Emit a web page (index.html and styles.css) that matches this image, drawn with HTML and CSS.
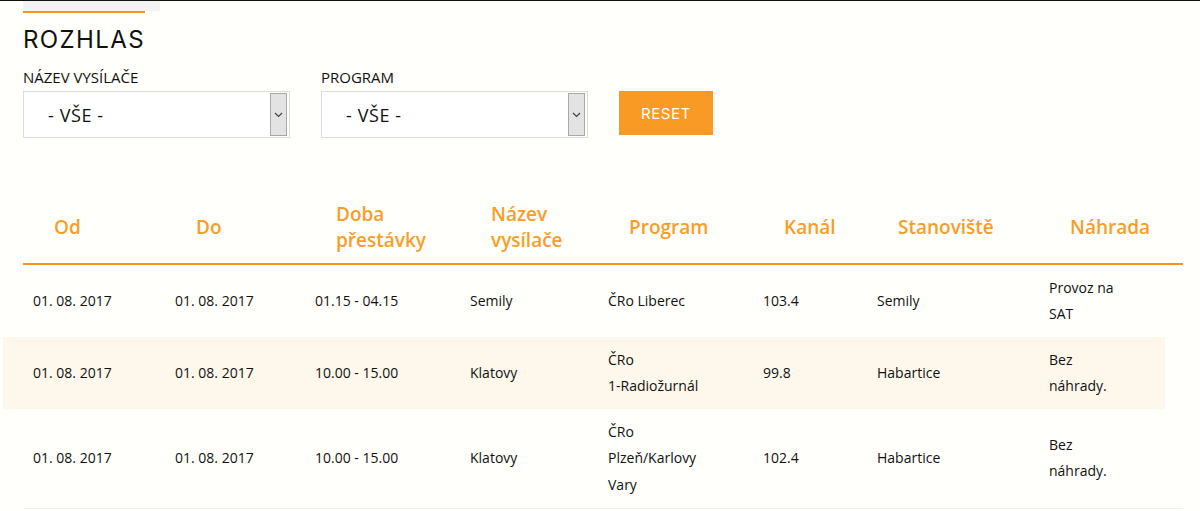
FILE: index.html
```html
<!DOCTYPE html>
<html lang="cs">
<head>
<meta charset="utf-8">
<title>Rozhlas</title>
<link rel="stylesheet" href="styles.css">
</head>
<body>
<div class="topline"></div>
<main class="page">
  <div class="accent"><div class="accent-gray"></div><div class="accent-line"></div></div>
  <h1 class="title">ROZHLAS</h1>
  <div class="filters">
    <div class="field">
      <label class="field-label">NÁZEV VYSÍLAČE</label>
      <div class="select">
        <span class="select-value">- VŠE -</span>
        <span class="select-btn"><svg width="9" height="6" viewBox="0 0 9 6"><path d="M1 1 L4.5 4.5 L8 1" fill="none" stroke="#444" stroke-width="1.2"/></svg></span>
      </div>
    </div>
    <div class="field">
      <label class="field-label">PROGRAM</label>
      <div class="select">
        <span class="select-value">- VŠE -</span>
        <span class="select-btn"><svg width="9" height="6" viewBox="0 0 9 6"><path d="M1 1 L4.5 4.5 L8 1" fill="none" stroke="#444" stroke-width="1.2"/></svg></span>
      </div>
    </div>
    <button class="reset" type="button">RESET</button>
  </div>

  <table class="outages">
    <colgroup>
      <col class="c1"><col class="c2"><col class="c3"><col class="c4"><col class="c5"><col class="c6"><col class="c7"><col class="c8">
    </colgroup>
    <thead>
      <tr>
        <th>Od</th>
        <th>Do</th>
        <th>Doba přestávky</th>
        <th>Název vysílače</th>
        <th>Program</th>
        <th>Kanál</th>
        <th>Stanoviště</th>
        <th>Náhrada</th>
      </tr>
    </thead>
    <tbody>
      <tr>
        <td>01. 08. 2017</td>
        <td>01. 08. 2017</td>
        <td>01.15 - 04.15</td>
        <td>Semily</td>
        <td class="prog">ČRo Liberec</td>
        <td>103.4</td>
        <td>Semily</td>
        <td class="repl">Provoz na SAT</td>
      </tr>
      <tr class="alt">
        <td>01. 08. 2017</td>
        <td>01. 08. 2017</td>
        <td>10.00 - 15.00</td>
        <td>Klatovy</td>
        <td class="prog">ČRo <span class="nowrap">1-Radiožurnál</span></td>
        <td>99.8</td>
        <td>Habartice</td>
        <td class="repl">Bez náhrady.</td>
      </tr>
      <tr class="last">
        <td>01. 08. 2017</td>
        <td>01. 08. 2017</td>
        <td>10.00 - 15.00</td>
        <td>Klatovy</td>
        <td class="prog">ČRo Plzeň/Karlovy Vary</td>
        <td>102.4</td>
        <td>Habartice</td>
        <td class="repl">Bez náhrady.</td>
      </tr>
    </tbody>
  </table>
</main>
</body>
</html>
```
FILE: styles.css
```css
html, body {
  margin: 0;
  padding: 0;
  background: #fffffb;
  font-family: "Open Sans", "Liberation Sans", sans-serif;
  color: #111;
}

.topline {
  height: 1px;
  background: #111;
}

.page {
  padding: 0 17px 0 23px;
}

.accent-gray {
  width: 137px;
  height: 10px;
  background: #f3f3f3;
}

.accent-line {
  width: 122px;
  height: 2px;
  background: #f7931e;
}

.title {
  margin: 12px 0 0;
  font-family: Inter, "Liberation Sans", sans-serif;
  font-weight: 400;
  font-size: 24px;
  line-height: 30px;
  letter-spacing: 1.4px;
  color: #111;
}

.filters {
  display: flex;
  align-items: flex-start;
  gap: 31px;
  margin-top: 12px;
}

.field {
  display: flex;
  flex-direction: column;
  gap: 4px;
}

.field-label {
  font-size: 15px;
  line-height: 20px;
  color: #111;
}

.select {
  box-sizing: border-box;
  width: 267px;
  height: 47px;
  border: 1px solid #dcdcdc;
  background: #fff;
  display: flex;
  align-items: stretch;
  padding: 1px 2px 1px 24px;
}

.select-value {
  flex: 1;
  display: flex;
  align-items: center;
  font-size: 18px;
  letter-spacing: 0.6px;
  color: #111;
}

.select-btn {
  box-sizing: border-box;
  width: 17px;
  border: 1px solid #a8a8a8;
  background: #e3e3e3;
  display: flex;
  align-items: center;
  justify-content: center;
}

.reset {
  margin-top: 24px;
  width: 94px;
  height: 44px;
  border: 0;
  background: #f99a24;
  color: #fff;
  font-family: Inter, "Liberation Sans", sans-serif;
  font-size: 15px;
  letter-spacing: 0.6px;
  padding: 0;
}

.outages {
  margin-top: 53px;
  width: 1160px;
  table-layout: fixed;
  border-collapse: separate;
  border-spacing: 0;
}

.c1 { width: 142px; }
.c2 { width: 140px; }
.c3 { width: 155px; }
.c4 { width: 138px; }
.c5 { width: 155px; }
.c6 { width: 114px; }
.c7 { width: 172px; }
.c8 { width: 144px; }

.outages th {
  text-align: left;
  vertical-align: middle;
  padding: 10px 10px 10px 31px;
  font-size: 19px;
  font-weight: 600;
  line-height: 26px;
  color: #f99d28;
  border-bottom: 2px solid #f7931e;
}

.outages td {
  vertical-align: middle;
  padding: 9.5px 30px 9.5px 10px;
  font-size: 14px;
  line-height: 26.5px;
  color: #111;
}

.nowrap {
  white-space: nowrap;
}

.outages td.repl {
  padding-right: 58px;
}

.outages tr.alt td {
  background: #fdf8eb;
}

.outages tr.alt td:first-child {
  box-shadow: -20px 0 0 #fdf8eb;
}

.outages tr.alt td:last-child {
  background: linear-gradient(to right, #fdf8eb calc(100% - 18px), transparent 0);
}

.outages tr.last td {
  border-bottom: 1px solid #f0f0f0;
}
```
